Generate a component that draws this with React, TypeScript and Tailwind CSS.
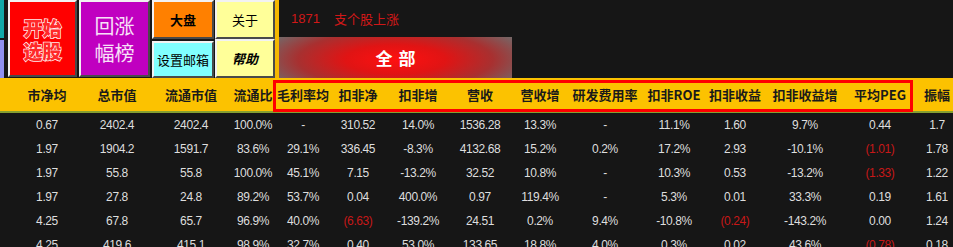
import React from 'react';

const cols = ['市净均', '总市值', '流通市值', '流通比', '毛利率均', '扣非净', '扣非增', '营收', '营收增', '研发费用率', '扣非ROE', '扣非收益', '扣非收益增', '平均PEG', '振幅'];

const rows: string[][] = [
  ['0.67', '2402.4', '2402.4', '100.0%', '-', '310.52', '14.0%', '1536.28', '13.3%', '-', '11.1%', '1.60', '9.7%', '0.44', '1.7'],
  ['1.97', '1904.2', '1591.7', '83.6%', '29.1%', '336.45', '-8.3%', '4132.68', '15.2%', '0.2%', '17.2%', '2.93', '-10.1%', '(1.01)', '1.78'],
  ['1.97', '55.8', '55.8', '100.0%', '45.1%', '7.15', '-13.2%', '32.52', '10.8%', '-', '10.3%', '0.53', '-13.2%', '(1.33)', '1.22'],
  ['1.97', '27.8', '24.8', '89.2%', '53.7%', '0.04', '400.0%', '0.97', '119.4%', '-', '5.3%', '0.01', '33.3%', '0.19', '1.61'],
  ['4.25', '67.8', '65.7', '96.9%', '40.0%', '(6.63)', '-139.2%', '24.51', '0.2%', '9.4%', '-10.8%', '(0.24)', '-143.2%', '0.00', '1.24'],
  ['4.25', '419.6', '415.1', '98.9%', '32.7%', '0.40', '53.0%', '133.65', '18.8%', '4.0%', '0.3%', '0.02', '43.6%', '(0.78)', '0.18'],
];

const grid = 'grid grid-cols-[12px_70px_70px_78px_46px_54px_56px_64px_60px_60px_70px_68px_54px_86px_64px_50px]';
const bevel = 'border-2 border-t-[#f2f2f2] border-l-[#f2f2f2] border-r-[#4a4a4a] border-b-[#4a4a4a]';

export default function App() {
  return (
    <div className="w-[953px] h-[247px] overflow-hidden bg-[#161616] font-['Noto_Sans_CJK_SC',sans-serif]">
      {/* top toolbar */}
      <div className="flex h-[78px]">
        <div className="flex flex-col w-[4px] gap-[2px]">
          <div className="h-[38px] bg-[#10a8a8]" />
          <div className="flex-1 bg-[#9090f0]" />
        </div>
        <div className="w-[4px]" />
        <div className={`w-[69px] h-[77px] bg-[#ff0000] ${bevel} flex flex-col items-center justify-center gap-[2px] leading-[21px] text-[19px] font-black text-[#ff2a2a] [-webkit-text-stroke:1.5px_#ffecec] [paint-order:stroke_fill]`}>
          <span>开始</span>
          <span>选股</span>
        </div>
        <div className="w-[2px]" />
        <div className={`w-[71px] h-[77px] bg-[#c000c0] ${bevel} flex flex-col items-center justify-center leading-[27px] text-[20px] text-[#f8e0f8]`}>
          <span>回涨</span>
          <span>幅榜</span>
        </div>
        <div className="w-[2px]" />
        <div className="grid grid-cols-[62px_60px] grid-rows-[39px_39px] gap-x-[1px] w-[123px] text-[13px] text-black">
          <div className={`bg-[#ff8000] ${bevel} flex items-center justify-center font-bold`}>大盘</div>
          <div className={`bg-[#ffff99] ${bevel} flex items-center justify-center`}>关于</div>
          <div className={`bg-[#80ffff] ${bevel} flex items-center justify-center mt-[2px]`}>设置邮箱</div>
          <div className={`bg-[#ffff99] ${bevel} flex items-center justify-center font-bold italic`}>帮助</div>
        </div>
        <div className="w-[4px] bg-[#f5b800]" />
        <div className="flex flex-col">
          <div className="h-[37px] flex items-center pl-[12px] text-[13px] text-[#d01818]">
            <span className="font-['Liberation_Sans',sans-serif]">1871</span>
            <span className="ml-[14px]">支个股上涨</span>
          </div>
          <div className="w-[233px] h-[41px] flex items-center justify-center bg-[radial-gradient(ellipse_72%_120%_at_50%_55%,#ff1010_0%,#e01414_30%,#a83030_58%,#706c6c_85%)] text-white font-bold text-[17px] tracking-[6px] pl-[6px]">
            全部
          </div>
        </div>
      </div>

      {/* header */}
      <div className={`relative ${grid} h-[35px] items-center bg-[#fcc200] border-b-2 border-[#86a030] text-[13px] font-bold text-[#1a1a1a] whitespace-nowrap`}>
        <div />
        {cols.map((c) => (
          <div key={c} className="text-center">{c}</div>
        ))}
        <div className="absolute left-[273px] top-[2px] w-[640px] h-[32px] border-[3px] border-[#ff0000]" />
      </div>

      {/* rows */}
      {rows.map((r, i) => (
        <div key={i} className={`${grid} h-[24px] items-center text-[12px] tracking-[-0.4px] font-['Liberation_Sans',sans-serif] text-[#dedede]`}>
          <div />
          {r.map((v, j) => (
            <div key={j} className={`text-center ${v.startsWith('(') ? 'text-[#c81818]' : ''}`}>{v}</div>
          ))}
        </div>
      ))}
    </div>
  );
}
